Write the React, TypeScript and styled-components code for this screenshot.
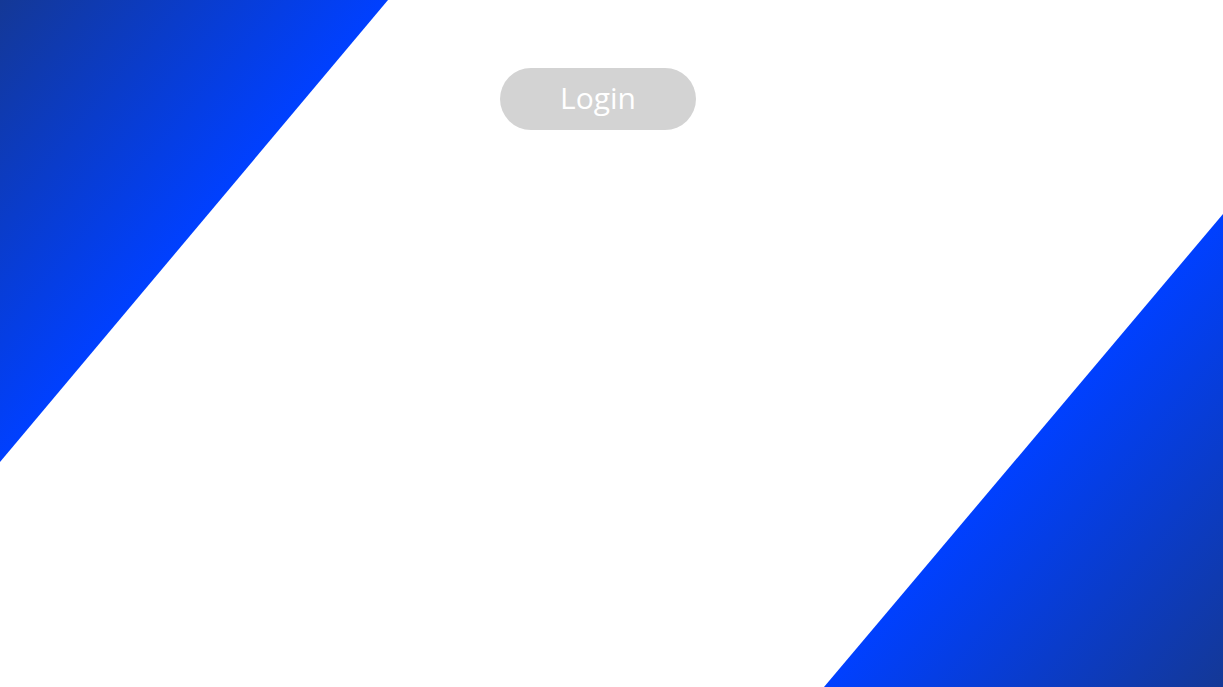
import React from "react";
import styled, { createGlobalStyle } from "styled-components";

const Global = createGlobalStyle`
  html, body { margin: 0; padding: 0; background: #ffffff; }
  body { font-family: "Open Sans", "Noto Sans", sans-serif; overflow: hidden; }
`;

const Page = styled.div`
  position: relative;
  width: 1223px;
  height: 687px;
  overflow: hidden;
  background: #ffffff;
`;

const Corner = styled.div<{ $side: "tl" | "br" }>`
  position: absolute;
  ${(p) =>
    p.$side === "tl"
      ? `left: 0; top: 0; width: 388px; height: 462px;
         clip-path: polygon(0 0, 100% 0, 0 100%);
         background: linear-gradient(to bottom right, #143896 0%, #0040ff 50%);`
      : `right: 0; bottom: 0; width: 399px; height: 473px;
         clip-path: polygon(100% 0, 100% 100%, 0 100%);
         background: linear-gradient(to top left, #143896 0%, #0040ff 50%);`}
`;

const Header = styled.div`
  position: relative;
  display: flex;
  padding: 68px 0 0 500px;
`;

const LoginButton = styled.button`
  width: 196px;
  height: 62px;
  border: none;
  border-radius: 31px;
  background: #d3d3d3;
  color: #ffffff;
  font-family: "Open Sans", sans-serif;
  font-size: 30px;
  line-height: 1;
  padding: 0 0 2px 0;
  cursor: pointer;
`;

export default function App() {
  return (
    <>
      <Global />
      <Page>
        <Corner $side="tl" />
        <Corner $side="br" />
        <Header>
          <LoginButton>Login</LoginButton>
        </Header>
      </Page>
    </>
  );
}
